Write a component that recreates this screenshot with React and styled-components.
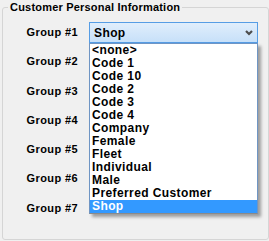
import React from "react";
import styled, { createGlobalStyle } from "styled-components";

const Global = createGlobalStyle`
  html, body { margin: 0; padding: 0; background: #f0f0f0; overflow: hidden; }
  body { font-family: "Liberation Sans", Arial, sans-serif; font-size: 11px; color: #000; }
`;

const GroupBox = styled.fieldset`
  box-sizing: border-box;
  margin: 0 0 0 2px;
  padding: 0 0 0 5px;
  width: 267px;
  height: 240px;
  border: 1px solid #d5d5d5;
  border-radius: 3px;
  min-width: 0;
`;

const Title = styled.legend`
  font-weight: bold;
  font-size: 11px;
  line-height: 14px;
  letter-spacing: 0.2px;
  padding: 0 2px;
`;

const Form = styled.div`
  display: grid;
  grid-template-columns: 71px 169px;
  grid-auto-rows: 29.25px;
  column-gap: 10px;
  margin-top: 4px;
`;

const Label = styled.div`
  align-self: center;
  justify-self: end;
  padding-right: 1px;
  font-weight: bold;
  line-height: 13px;
  letter-spacing: 0.4px;
`;

const ComboWrap = styled.div`
  position: relative;
  align-self: start;
  margin-top: 4px;
`;

const Combo = styled.div`
  box-sizing: border-box;
  height: 21px;
  border: 1px solid #569de5;
  background: linear-gradient(#e0eefc, #c7e0f9);
  display: flex;
  align-items: center;
  justify-content: space-between;
  padding: 0 4px 0 4px;
  font-weight: bold;
  font-size: 12px;
  letter-spacing: 0.4px;
`;

const List = styled.ul`
  position: absolute;
  top: 100%;
  left: 0;
  width: 169px;
  box-sizing: border-box;
  margin: 0;
  padding: 0;
  list-style: none;
  background: #fff;
  border: 1px solid #6f95c4;
  border-bottom-color: #8a8a8a;
  box-shadow: 3px 3px 3px rgba(0, 0, 0, 0.35);
  z-index: 2;
`;

const Item = styled.li`
  height: 13px;
  line-height: 13px;
  padding-left: 2px;
  font-weight: bold;
  font-size: 12px;
  letter-spacing: 0.4px;
  white-space: nowrap;
  background: ${(p) => (p.$selected ? "#3399ff" : "transparent")};
  color: ${(p) => (p.$selected ? "#fff" : "#000")};
`;

const items = [
  "<none>",
  "Code 1",
  "Code 10",
  "Code 2",
  "Code 3",
  "Code 4",
  "Company",
  "Female",
  "Fleet",
  "Individual",
  "Male",
  "Preferred Customer",
  "Shop",
];

const Chevron = () => (
  <svg width="8" height="6" viewBox="0 0 8 6">
    <polyline points="1,1 4,4 7,1" fill="none" stroke="#4d4d4d" strokeWidth="2.2" />
  </svg>
);

export default function App() {
  return (
    <>
      <Global />
      <GroupBox>
        <Title>Customer Personal Information</Title>
        <Form>
          {[1, 2, 3, 4, 5, 6, 7].map((n) => (
            <React.Fragment key={n}>
              <Label>Group #{n}</Label>
              {n === 1 ? (
                <ComboWrap>
                  <Combo>
                    <span>Shop</span>
                    <Chevron />
                  </Combo>
                  <List>
                    {items.map((it) => (
                      <Item key={it} $selected={it === "Shop"}>
                        {it}
                      </Item>
                    ))}
                  </List>
                </ComboWrap>
              ) : (
                <div />
              )}
            </React.Fragment>
          ))}
        </Form>
      </GroupBox>
    </>
  );
}
